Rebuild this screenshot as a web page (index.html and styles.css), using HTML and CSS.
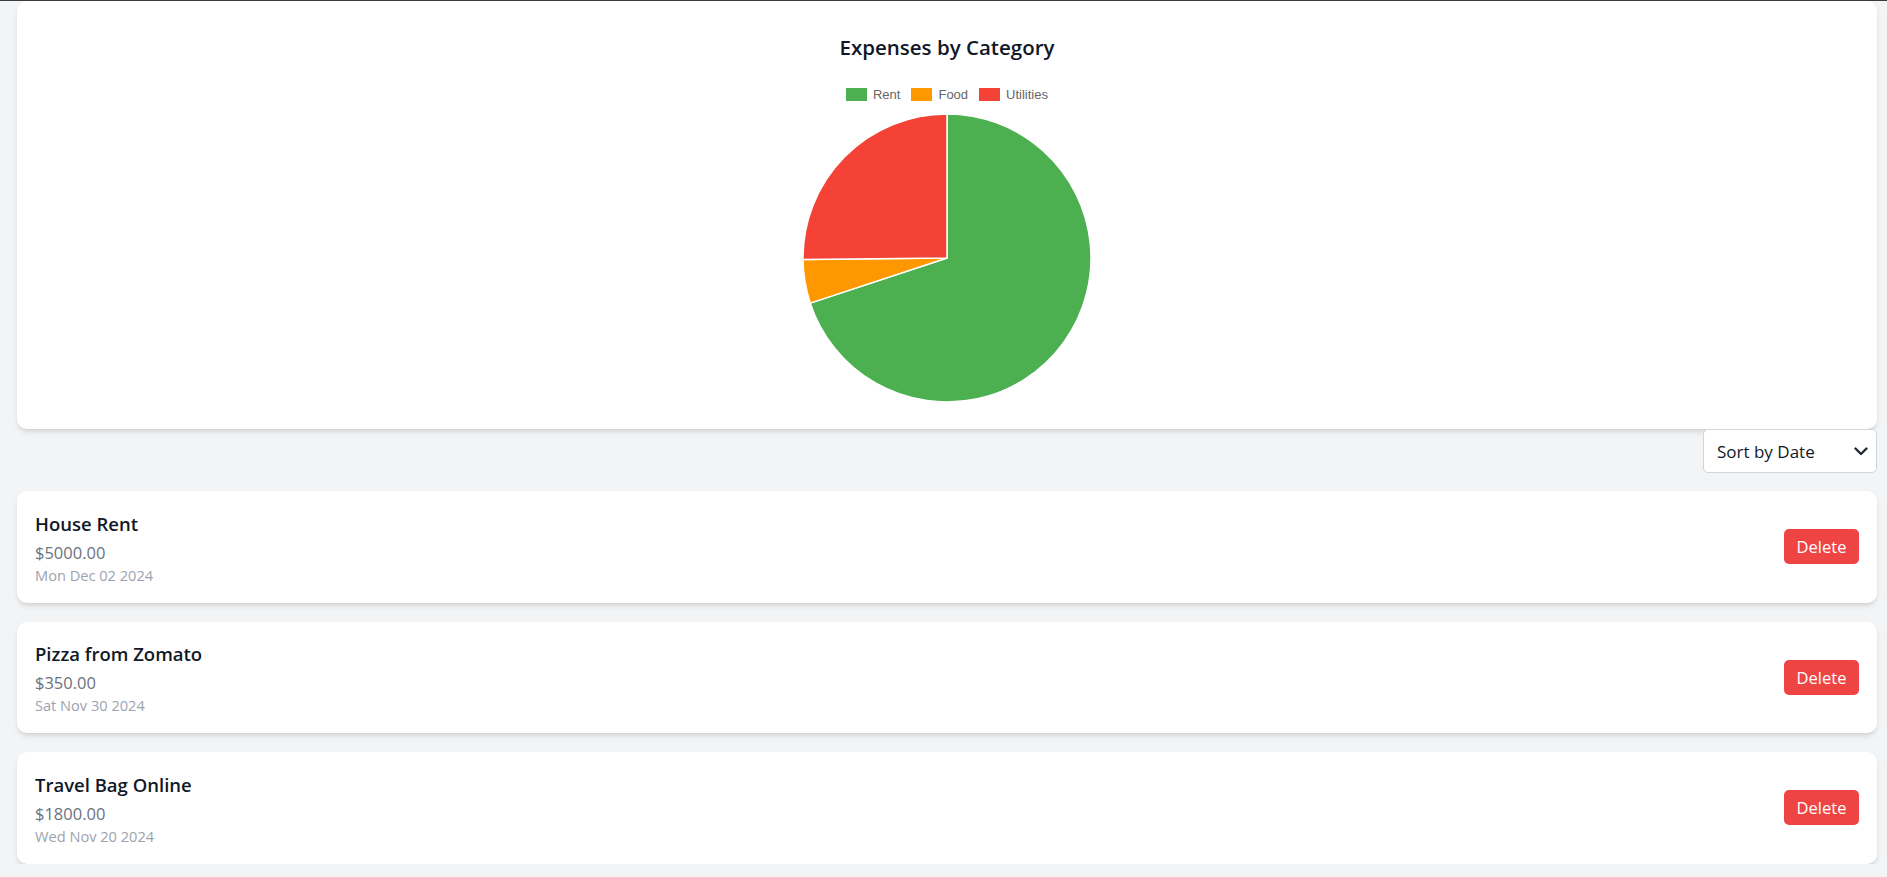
FILE: index.html
```html
<!DOCTYPE html>
<html lang="en">
<head>
<meta charset="utf-8">
<title>Expenses</title>
<link rel="stylesheet" href="styles.css">
</head>
<body>
<div class="topline"></div>
<main class="page">
  <section class="card chart-card">
    <h2 class="chart-title">Expenses by Category</h2>
    <ul class="legend">
      <li class="legend-item"><span class="swatch swatch-rent"></span>Rent</li>
      <li class="legend-item"><span class="swatch swatch-food"></span>Food</li>
      <li class="legend-item"><span class="swatch swatch-util"></span>Utilities</li>
    </ul>
    <svg class="pie" width="290" height="290" viewBox="0 0 290 290" aria-label="Expenses pie chart">
      <path d="M145,145 L145,1 A144,144 0 1 1 8.25,190.11 Z" fill="#4caf50" stroke="#fff" stroke-width="1.5" stroke-linejoin="round"/>
      <path d="M145,145 L8.25,190.11 A144,144 0 0 1 1.01,146.58 Z" fill="#ff9800" stroke="#fff" stroke-width="1.5" stroke-linejoin="round"/>
      <path d="M145,145 L1.01,146.58 A144,144 0 0 1 145,1 Z" fill="#f44336" stroke="#fff" stroke-width="1.5" stroke-linejoin="round"/>
    </svg>
  </section>

  <div class="sort-row">
    <div class="select-wrap">
      <select class="sort-select">
        <option>Sort by Date</option>
        <option>Sort by Amount</option>
      </select>
      <svg class="chevron" width="14" height="9" viewBox="0 0 14 9"><path d="M1.5 1.5 L7 7 L12.5 1.5" fill="none" stroke="#1f2937" stroke-width="2.4" stroke-linecap="round" stroke-linejoin="round"/></svg>
    </div>
  </div>

  <ul class="expense-list">
    <li class="card expense">
      <div class="expense-info">
        <h3 class="expense-title">House Rent</h3>
        <p class="expense-amount">$5000.00</p>
        <p class="expense-date">Mon Dec 02 2024</p>
      </div>
      <button class="delete-btn">Delete</button>
    </li>
    <li class="card expense">
      <div class="expense-info">
        <h3 class="expense-title">Pizza from Zomato</h3>
        <p class="expense-amount">$350.00</p>
        <p class="expense-date">Sat Nov 30 2024</p>
      </div>
      <button class="delete-btn">Delete</button>
    </li>
    <li class="card expense">
      <div class="expense-info">
        <h3 class="expense-title">Travel Bag Online</h3>
        <p class="expense-amount">$1800.00</p>
        <p class="expense-date">Wed Nov 20 2024</p>
      </div>
      <button class="delete-btn">Delete</button>
    </li>
  </ul>
</main>
</body>
</html>
```
FILE: styles.css
```css
* { box-sizing: border-box; }
html, body { margin: 0; padding: 0; }
body {
  background: #f3f4f6;
  font-family: "Open Sans", "Noto Sans", sans-serif;
  color: #111827;
  overflow: hidden;
}
.topline { height: 1px; background: #3c3c3c; }
.page { padding: 0 10px 0 17px; }
.card {
  background: #fff;
  border-radius: 10px;
  box-shadow: 0 4px 6px -1px rgba(0,0,0,0.1), 0 2px 4px -2px rgba(0,0,0,0.1);
}
.chart-card {
  height: 428px;
  padding-top: 32px;
  display: flex;
  flex-direction: column;
  align-items: center;
}
.chart-title {
  margin: 0;
  font-size: 20.5px;
  line-height: 28px;
  font-weight: 600;
  color: #111827;
}
.legend {
  list-style: none;
  margin: 26px 0 0;
  padding: 0;
  display: flex;
  gap: 11px;
  font-family: "Liberation Sans", Arial, sans-serif;
  font-size: 13px;
  line-height: 15px;
  color: #666;
}
.legend-item { display: flex; align-items: center; gap: 6px; }
.swatch { width: 21px; height: 13px; display: block; }
.swatch-rent { background: #4caf50; }
.swatch-food { background: #ff9800; }
.swatch-util { background: #f44336; }
.pie { display: block; margin-top: 11px; }

.sort-row { display: flex; justify-content: flex-end; }
.select-wrap { position: relative; width: 174px; height: 44px; }
.sort-select {
  appearance: none;
  -webkit-appearance: none;
  width: 100%;
  height: 100%;
  border: 1px solid #d1d5db;
  border-radius: 5px;
  background: #fff;
  padding: 0 30px 0 13px;
  font-family: "Open Sans", "Noto Sans", sans-serif;
  font-size: 17px;
  color: #111827;
}
.chevron { position: absolute; right: 9px; top: 18px; pointer-events: none; }

.expense-list {
  list-style: none;
  margin: 18px 0 0;
  padding: 0;
  display: flex;
  flex-direction: column;
  gap: 19px;
}
.expense {
  display: flex;
  align-items: center;
  justify-content: space-between;
  padding: 17px 18px 17px 18px;
  height: 111.5px;
}
.expense-info { padding-top: 1px; }
.expense-title {
  margin: 0 0 3px;
  font-size: 18.5px;
  line-height: 28px;
  font-weight: 600;
  color: #111827;
}
.expense-amount {
  margin: 0;
  font-size: 16.5px;
  line-height: 24px;
  color: #6b7280;
}
.expense-date {
  margin: 0;
  font-size: 14.6px;
  line-height: 20px;
  color: #9ca3af;
}
.delete-btn {
  width: 75px;
  height: 35px;
  border: none;
  border-radius: 5px;
  background: #ef4444;
  color: #fff;
  font-family: "Open Sans", "Noto Sans", sans-serif;
  font-size: 16.5px;
  padding: 0;
}
```
